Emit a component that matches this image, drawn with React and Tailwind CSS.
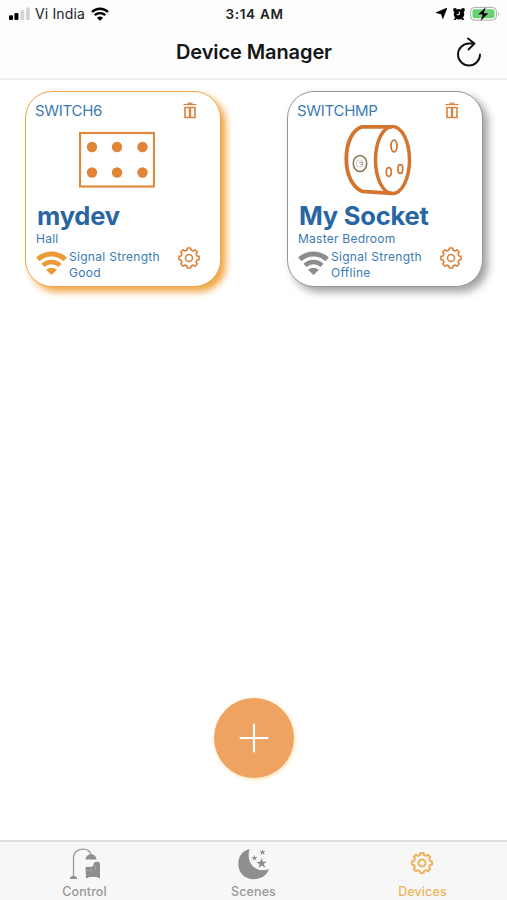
import React from 'react';

const point = (radius, degrees) => {
  const a = (degrees * Math.PI) / 180;
  return `${(12 + radius * Math.cos(a)).toFixed(2)} ${(12 + radius * Math.sin(a)).toFixed(2)}`;
};

// eight teeth, one every 45 degrees
const gearPath =
  [0, 45, 90, 135, 180, 225, 270, 315]
    .map((d, i) =>
      `${i === 0 ? 'M' : 'L'}${point(8.3, d - 14)} L${point(10.2, d - 9)} L${point(10.2, d + 9)} L${point(8.3, d + 14)} Q${point(8, d + 22.5)} ${point(8.3, d + 31)}`
    )
    .join(' ') + 'Z';

const GearIcon = ({ className, strokeWidth = 1.6 }) => (
  <svg className={className} viewBox="0 0 24 24" fill="none" stroke="currentColor" strokeWidth={strokeWidth} strokeLinejoin="round">
    <path d={gearPath} />
    <circle cx="12" cy="12" r="3.5" />
  </svg>
);

const WifiIcon = ({ className }) => (
  <svg className={className} viewBox="0 0 31 24" fill="none" stroke="currentColor">
    <path d="M1.8 8.4A20 20 0 0 1 29.2 8.4" strokeWidth="5" />
    <path d="M7 14.4A12.4 12.4 0 0 1 24 14.4" strokeWidth="4.6" />
    <path d="M10 18.8Q15.5 14.6 21 18.8L15.5 24Z" fill="currentColor" stroke="none" />
  </svg>
);

const TrashIcon = () => (
  <svg className="w-[14px] h-[17px] text-[#d9833f]" viewBox="0 0 14 17" fill="none" stroke="currentColor">
    <path d="M0.5 2.5H13.5" strokeWidth="1.2" />
    <path d="M4.5 1.2H9.5" strokeWidth="1.2" />
    <path d="M2 5.5H12V15.5H2Z" strokeWidth="1.6" />
    <path d="M7 5V16" strokeWidth="2.4" />
  </svg>
);

const SwitchPanel = () => (
  <svg className="w-[76px] h-[72px]" viewBox="0 0 76 72" fill="none">
    <rect x="1" y="9" width="74" height="53.5" stroke="#df893f" strokeWidth="2.2" />
    <g fill="#e08437">
      <circle cx="13" cy="23" r="5.2" />
      <circle cx="38" cy="23" r="5.2" />
      <circle cx="63.5" cy="23" r="5.2" />
      <circle cx="13" cy="48.5" r="5.2" />
      <circle cx="38" cy="48.5" r="5.2" />
      <circle cx="63.5" cy="48.5" r="5.2" />
    </g>
  </svg>
);

const SocketPlug = () => (
  <svg className="w-[76px] h-[72px]" viewBox="-1 0 76 72" fill="none" stroke="#d3752f">
    <path d="M50 2.8H20C10 6 4.3 19 4.3 35C4.3 50 10 63 20 67.3L50 69.3" strokeWidth="3.8" />
    <ellipse cx="50.5" cy="36" rx="17" ry="33.5" strokeWidth="3.5" />
    <ellipse cx="52" cy="22" rx="3" ry="5.8" strokeWidth="1.8" />
    <ellipse cx="46.8" cy="48" rx="2.5" ry="4.3" strokeWidth="1.7" />
    <ellipse cx="58.3" cy="45" rx="2.4" ry="4.4" strokeWidth="1.7" />
    <ellipse cx="18" cy="39.5" rx="6.7" ry="8" stroke="#85794f" strokeWidth="1.6" />
    <circle cx="17.7" cy="39.5" r="3.6" stroke="#cfc8c4" strokeWidth="1" />
    <path d="M17 38.5H21M18.5 40.5H21" stroke="#a0938f" strokeWidth="1" />
  </svg>
);

const devices = [
  {
    model: 'SWITCH6',
    name: 'mydev',
    room: 'Hall',
    status: 'Good',
    image: <SwitchPanel />,
    card: 'border-[#eda64f] shadow-[5px_5px_7px_rgba(240,150,40,0.85)]',
    wifi: 'text-[#ec9a35]'
  },
  {
    model: 'SWITCHMP',
    name: 'My Socket',
    room: 'Master Bedroom',
    status: 'Offline',
    image: <SocketPlug />,
    card: 'border-[#979797] shadow-[5px_5px_8px_rgba(110,110,110,0.65)]',
    wifi: 'text-[#8c8c8c]'
  }
];

const DeviceCard = ({ device }) => (
  <div className={`w-[196px] h-[196px] rounded-[27px] border-[1.5px] bg-white pl-[9px] text-[#3c7ab3] whitespace-nowrap ${device.card}`}>
    <div className="flex justify-between items-start pt-[10px] pr-[23px] h-[32px]">
      <span className="text-[15px] leading-[18px] tracking-[-0.3px]">{device.model}</span>
      <TrashIcon />
    </div>
    <div className="pl-[44px] h-[72px]">{device.image}</div>
    <h2 className="pl-[2px] pt-[4px] text-[25.5px] leading-[32px] font-bold tracking-[-0.2px] text-[#2865a3]">{device.name}</h2>
    <p className="pl-px text-[12px] leading-[14px] tracking-[0.25px]">{device.room}</p>
    <div className="flex mt-[2px]">
      <WifiIcon className={`w-[31px] h-[24px] mt-[3px] ml-px ${device.wifi}`} />
      <p className="ml-[2px] text-[12px] leading-[16px] tracking-[0.3px] w-[108px] mt-px">
        Signal Strength<br />{device.status}
      </p>
      <GearIcon className="w-[24px] h-[24px] -mt-[2px] text-[#d9833f]" />
    </div>
  </div>
);

const StatusBar = () => (
  <div className="flex items-center justify-between h-[27px] pl-[9px] pr-[7px] text-[13px] text-[#222]">
    <div className="flex items-center w-[160px]">
      <svg className="w-[22px] h-[14px]" viewBox="0 0 22 14">
        <rect x="0" y="8.3" width="4" height="4.7" rx="1.2" fill="#000" />
        <rect x="5.4" y="6" width="4" height="7" rx="1.2" fill="#000" />
        <rect x="11.5" y="3.2" width="3.8" height="9.8" rx="1.2" fill="#d3d3d3" />
        <rect x="17" y="0.5" width="3.8" height="12.5" rx="1.2" fill="#d3d3d3" />
      </svg>
      <span className="ml-[4px] text-[14px] tracking-[0.15px]">Vi India</span>
      <svg className="w-[18px] h-[14px] ml-[6px] text-black" viewBox="0 0 18 14" fill="none" stroke="currentColor" strokeWidth="2.4">
        <path d="M1 5A11.5 11.5 0 0 1 17 5" />
        <path d="M3.8 8.2A7.5 7.5 0 0 1 14.2 8.2" />
        <path d="M6 10.9Q9 8.2 12 10.9L9 13.8Z" fill="currentColor" stroke="none" />
      </svg>
    </div>
    <span className="font-semibold text-[13.5px] leading-[16px] mt-px tracking-[0.7px]">3:14 AM</span>
    <div className="flex items-center justify-end w-[160px]">
      <svg className="w-[11px] h-[11px] mr-[6px]" viewBox="0 0 11 11">
        <path d="M11 0L6.8 10.7L5.4 6L0 4.7Z" fill="#000" stroke="#000" strokeWidth="0.6" strokeLinejoin="round" />
      </svg>
      <svg className="w-[12px] h-[12px] mr-[5px]" viewBox="0 0 12 12">
        <circle cx="6" cy="6.3" r="5.2" fill="#000" />
        <circle cx="2" cy="2" r="1.9" fill="#000" />
        <circle cx="10" cy="2" r="1.9" fill="#000" />
        <path d="M3 10L1.5 12M9 10L10.5 12" stroke="#000" strokeWidth="1.8" />
        <path d="M6.3 3.6V6.7H3.8" stroke="#fff" strokeWidth="1" fill="none" />
      </svg>
      <svg className="w-[30px] h-[16px]" viewBox="0 0 30 16">
        <rect x="0.6" y="1.4" width="25.8" height="12.8" rx="4" fill="#fff" stroke="#aaa" />
        <rect x="2.5" y="3.3" width="22" height="9" rx="2" fill="#62d36f" />
        <path d="M28 5.8Q30 7.8 28 9.8Z" fill="#aaa" />
        <path d="M16.2 0.5L7.5 8.8H12.3L10.2 15.4L19 6.9H14.2Z" fill="#000" stroke="#fff" strokeWidth="0.4" />
      </svg>
    </div>
  </div>
);

const LampIcon = () => (
  <svg className="w-[32px] h-[32px]" viewBox="0 0 32 32" fill="none" stroke="#999">
    <path d="M4.5 29V10C4.5 -1.5 22 -1.5 22 7.5" strokeWidth="1.3" />
    <path d="M16.5 11.5C17 4.5 27 4.5 27.5 11.5Z" fill="#8e8e8e" stroke="none" />
    <path d="M1 31V29.4Q4.5 26.8 8 29.4V31Z" fill="#8e8e8e" stroke="none" />
    <path d="M16.5 20Q16.5 18.8 18 18.8H22.5Q24.5 18.8 24.5 15.8Q25 13.8 27.5 13.8H29Q31 13.8 31 16V30H28.5V29H19.5V30H17Z" fill="#8e8e8e" stroke="none" />
    <path d="M17 22.5H23.5M26.5 17V22" stroke="#aaa" strokeWidth="0.7" />
  </svg>
);

const MoonIcon = () => (
  <svg className="w-[32px] h-[32px]" viewBox="0 0 32 32" fill="#8e8e8e">
    <path d="M11.5 1C3.5 3 0.3 9 0.3 16C0.3 25 7 31.2 15.5 31.2C23.5 31.2 29 27 31 21C21.5 25.5 7 18.5 11.5 1Z" />
    <path d="M23.5 10L25 13.8L28.8 13.5L25.8 16L27.3 19.8L23.7 17.6L20.5 20L21.5 16.2L18.3 13.9L22.2 13.7Z" />
    <path d="M24.5 1.2L25.2 3.3L27.5 3.2L25.7 4.6L26.6 6.8L24.5 5.5L22.5 6.9L23.1 4.6L21.3 3.2H23.7Z" />
    <path d="M16.5 7L17.2 9L19.4 8.8L17.7 10.3L18.5 12.4L16.4 11.2L14.5 12.4L15.1 10.3L13.4 8.9L15.7 8.9Z" />
  </svg>
);

const tabs = [
  { label: 'Control', icon: <LampIcon />, color: 'text-[#989898]' },
  { label: 'Scenes', icon: <MoonIcon />, color: 'text-[#989898]' },
  { label: 'Devices', icon: <GearIcon className="w-[24px] h-[24px] mb-[2px] mr-[3px]" strokeWidth={2} />, color: 'text-[#efb35e]' }
];

const App = () => {
  return (
    <div className="w-full h-screen flex flex-col bg-white overflow-hidden font-['Inter','Liberation_Sans',sans-serif]">
      {/* Header */}
      <header className="h-[80px] shrink-0 bg-[#fdfdfd] border-b-2 border-[#eeeeee]">
        <StatusBar />
        <div className="grid grid-cols-[1fr_auto_1fr] items-center h-[50px] pr-[25px]">
          <h1 className="col-start-2 pl-[26px] text-[20px] font-semibold tracking-[-0.1px] text-[#151515]">Device Manager</h1>
          <button className="justify-self-end">
            <svg className="w-[26px] h-[30px]" viewBox="0 0 26 30" fill="none" stroke="#111" strokeWidth="1.9" strokeLinecap="round" strokeLinejoin="round">
              <path d="M17 6.5H13A11 11 0 1 0 24 17.5M12 1.5L18.5 6.5L12.5 12.5" />
            </svg>
          </button>
        </div>
      </header>

      {/* Devices */}
      <main className="flex-1 flex flex-col justify-between">
        <div className="flex gap-[66px] pl-[25px] pt-[11px]">
          {devices.map((device) => (
            <DeviceCard key={device.model} device={device} />
          ))}
        </div>
        <button className="self-center mb-[62px] w-[80px] h-[80px] rounded-full bg-[#eea363] flex items-center justify-center shadow-[1px_1px_4px_#ffdca0]">
          <svg className="w-[30px] h-[30px]" viewBox="0 0 30 30" stroke="#fff" strokeWidth="2.2" strokeLinecap="round">
            <path d="M15 1.5V28.5M1.5 15H28.5" />
          </svg>
        </button>
      </main>

      {/* Tab bar */}
      <nav className="h-[60px] shrink-0 grid grid-cols-3 bg-[#f7f7f7] border-t-2 border-[#dedede]">
        {tabs.map((tab) => (
          <button key={tab.label} className={`flex flex-col items-center pt-[5px] ${tab.color}`}>
            <span className="h-[33px] flex items-center justify-center pl-px">{tab.icon}</span>
            <span className="text-[12.5px] leading-[15px] mt-[4px] font-medium tracking-[0.1px]">{tab.label}</span>
          </button>
        ))}
      </nav>
    </div>
  );
};

export default App;
